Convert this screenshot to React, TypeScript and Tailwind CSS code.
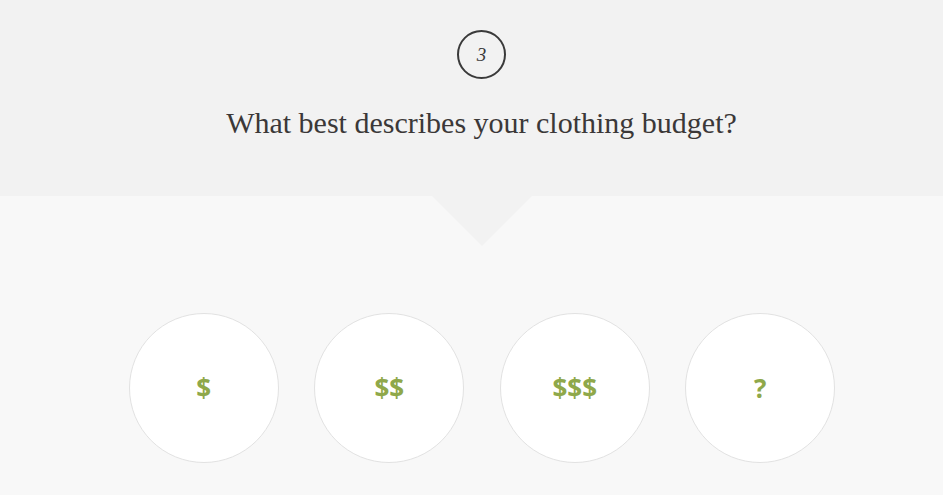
const options = ['$', '$$', '$$$', '?'];

export default function App() {
  return (
    <div className="flex h-[495px] w-[943px] flex-col overflow-hidden bg-[#f8f8f8]">
      {/* Question header */}
      <div className="relative flex h-[196px] flex-col items-center bg-[#f2f2f2] pl-[20px] pt-[30px]">
        <div className="flex h-[49px] w-[49px] items-center justify-center rounded-full border-2 border-[#3a3a3a]">
          <span className="font-['Liberation_Serif',serif] text-[19px] italic leading-none text-[#3a3a3a]">3</span>
        </div>
        <h1 className="mt-[24px] font-['Liberation_Serif',serif] text-[30px] leading-[40px] text-[#3b3838]">
          What best describes your clothing budget?
        </h1>
        {/* pointer */}
        <div className="absolute left-[432px] top-[196px] h-0 w-0 border-x-[50px] border-t-[50px] border-x-transparent border-t-[#f2f2f2]" />
      </div>

      {/* Answers */}
      <div className="flex justify-center gap-[35.5px] pl-[21px] pt-[117px]">
        {options.map((o) => (
          <button
            key={o}
            className="flex h-[150px] w-[150px] items-center justify-center rounded-full border border-[#e2e2e2] bg-white font-['Open_Sans',sans-serif] text-[26px] font-bold text-[#8fa84a]"
          >
            {o}
          </button>
        ))}
      </div>
    </div>
  );
}
